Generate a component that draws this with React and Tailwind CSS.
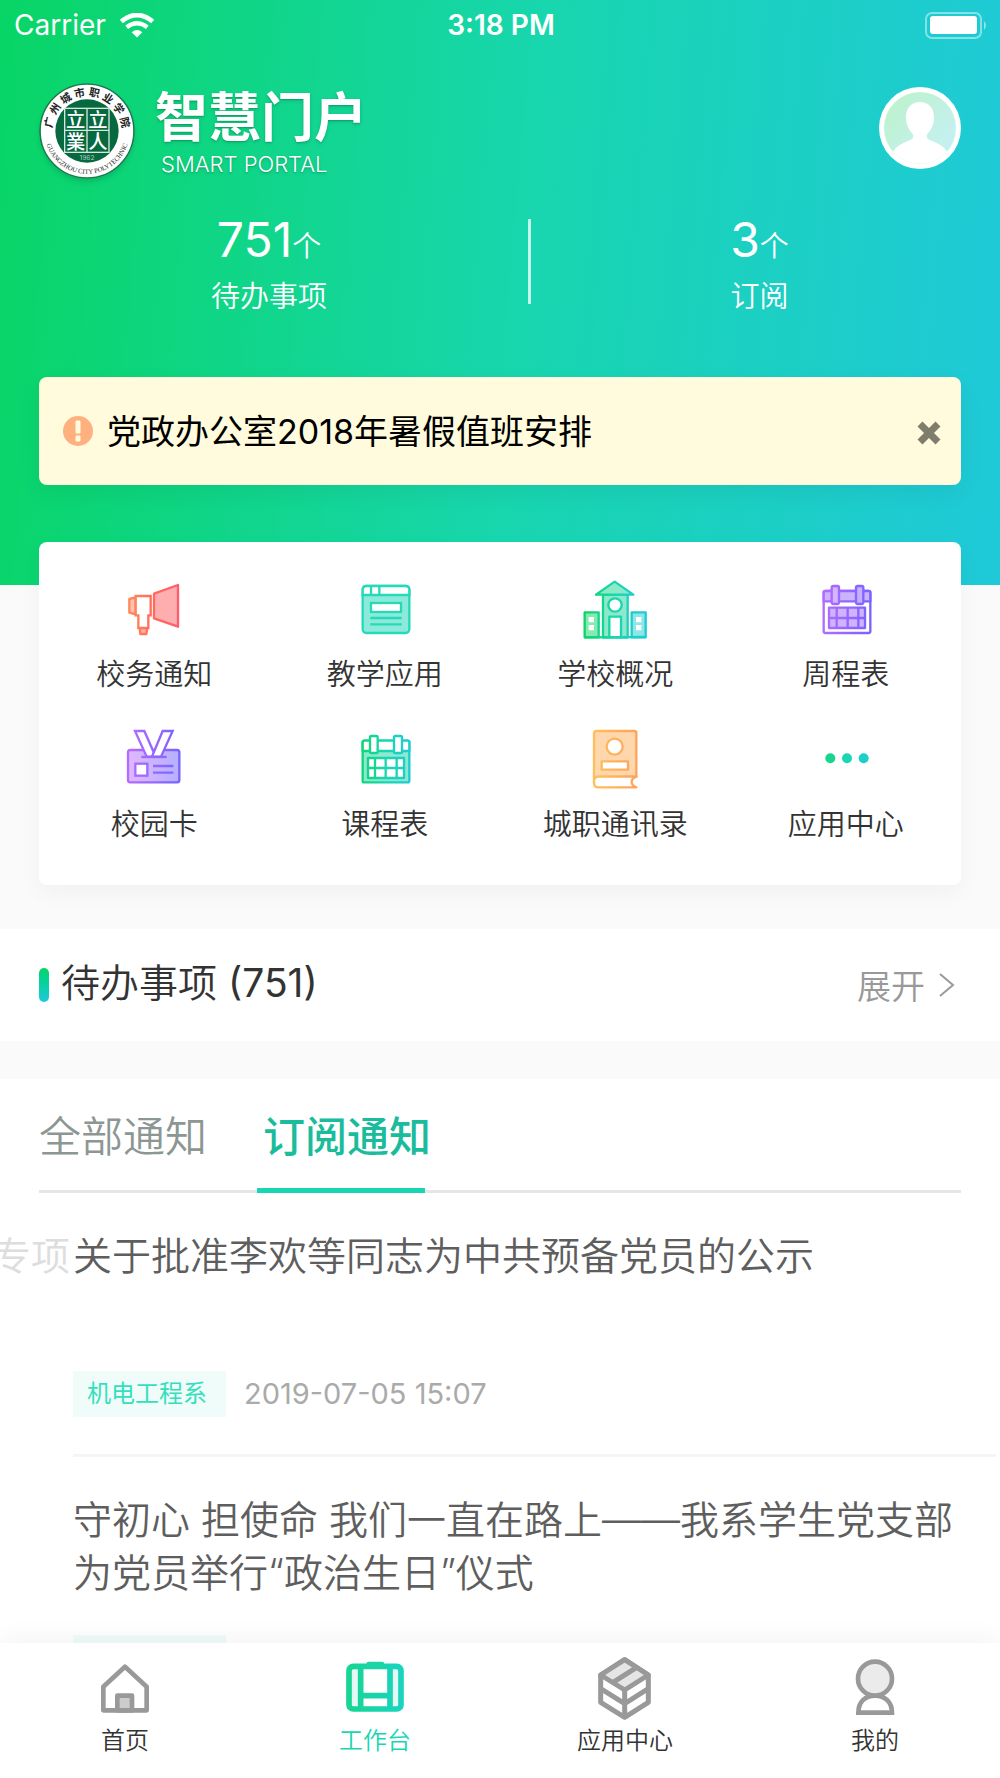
import { useState } from "react";

const SEAL_TOP = ["广", "州", "城", "市", "职", "业", "学", "院"];

function Seal() {
  return (
    <svg
      viewBox="0 0 288 288"
      className="w-24 h-24 shrink-0 rounded-full shadow-md"
      role="img"
      aria-label="广州城市职业学院"
    >
      <circle cx="144" cy="144" r="141" fill="#fff" stroke="#1c7a4c" strokeWidth="5" />
      <circle cx="144" cy="144" r="95" fill="#06693f" />
      {SEAL_TOP.map((char, i) => (
        <text
          key={char}
          x="144"
          y="39"
          textAnchor="middle"
          fontSize="32"
          fontWeight="700"
          fill="#222"
          transform={`rotate(${-77 + i * 22} 144 144)`}
        >
          {char}
        </text>
      ))}
      <path id="seal-arc" d="M19 172A128 128 0 0 0 269 172" fill="none" />
      <text fontSize="20" fontFamily="Liberation Serif, serif" fill="#222">
        <textPath href="#seal-arc" startOffset="50%" textAnchor="middle">
          GUANGZHOU CITY POLYTECHNIC
        </textPath>
      </text>
      <g stroke="#d6e8de" strokeWidth="4" fill="none">
        <rect x="77" y="76" width="133" height="132" />
        <path d="M144 76V208M77 142H210" />
      </g>
      <g fill="#fff" fontSize="58" fontWeight="500" textAnchor="middle">
        <text x="110" y="131">立</text>
        <text x="177" y="131">立</text>
        <text x="110" y="197">業</text>
        <text x="177" y="197">人</text>
      </g>
      <text x="144" y="230" fontSize="20" fill="#a9d3bf" textAnchor="middle">
        1962
      </text>
    </svg>
  );
}

/* Gradients shared by the line icons */
function IconGradients() {
  return (
    <svg width="0" height="0" className="absolute" aria-hidden="true">
      <defs>
        <linearGradient id="red" gradientUnits="userSpaceOnUse" x1="20" y1="0" x2="170" y2="0">
          <stop offset="0" stopColor="#ff8a5c" />
          <stop offset="0.5" stopColor="#ff6b5c" />
          <stop offset="1" stopColor="#ff5c6c" />
        </linearGradient>
        <linearGradient id="green" gradientUnits="userSpaceOnUse" x1="5" y1="0" x2="189" y2="0">
          <stop offset="0" stopColor="#0bd566" />
          <stop offset="0.5" stopColor="#1ad6b0" />
          <stop offset="1" stopColor="#1fc9d8" />
        </linearGradient>
        <linearGradient id="teal" gradientUnits="userSpaceOnUse" x1="9" y1="0" x2="183" y2="0">
          <stop offset="0" stopColor="#17d592" />
          <stop offset="1" stopColor="#1ad4c0" />
        </linearGradient>
        <linearGradient id="purple" gradientUnits="userSpaceOnUse" x1="20" y1="0" x2="172" y2="0">
          <stop offset="0" stopColor="#b46cff" />
          <stop offset="1" stopColor="#7a62ff" />
        </linearGradient>
        <linearGradient id="orange" gradientUnits="userSpaceOnUse" x1="33" y1="0" x2="160" y2="0">
          <stop offset="0" stopColor="#ffbf5a" />
          <stop offset="1" stopColor="#ffa35f" />
        </linearGradient>
      </defs>
    </svg>
  );
}

function Icon({ children }) {
  return (
    <svg viewBox="0 0 192 192" className="w-16 h-16" fill="none" aria-hidden="true">
      {children}
    </svg>
  );
}

function MegaphoneIcon() {
  return (
    <Icon>
      <g stroke="url(#red)" strokeWidth="7" strokeLinejoin="round">
        <path d="M96 50L168 24V149L96 124Z" fill="#ffaeb0" />
        <path d="M41 61L22 66V107L41 112Z" fill="#ffc3ad" />
        <path d="M53 153L55 171H73L76 153Z" fill="#ffb5a8" />
        <path d="M41 57H86V115H79V153H49V115H41Z" fill="#fff" strokeLinejoin="miter" />
      </g>
    </Icon>
  );
}

function TeachingIcon() {
  return (
    <Icon>
      <g stroke="#26d9b8" strokeWidth="7">
        <rect x="29" y="27" width="140" height="141" rx="11" fill="#8ceadb" />
        <path d="M29 54V38Q29 27 40 27H158Q169 27 169 38V54Z" fill="#fff" />
        <path d="M54 27V54M79 27V54" />
        <rect x="54" y="78" width="90" height="27" fill="#fff" />
        <path d="M52 123H146M52 142H146" />
      </g>
    </Icon>
  );
}

function SchoolIcon() {
  return (
    <Icon>
      <g stroke="url(#green)" strokeWidth="7" strokeLinejoin="round">
        <rect x="60" y="53" width="74" height="128" fill="#8ceacb" />
        <path d="M95 14L151 53H39Z" fill="#8ceacb" />
        <circle cx="96" cy="84" r="20" fill="#fff" />
        <path d="M79 181V119H114V181" fill="#fff" />
        <rect x="5" y="106" width="42" height="75" fill="#85eab2" />
        <rect x="146" y="106" width="42" height="75" fill="#8fe6e8" />
        <path d="M60 181H134" />
        <path d="M5 181L188 180" />
      </g>
      <path
        d="M17 120h16v16H17zM17 144h16v16H17zM159 120h16v16H159zM159 144h16v16H159z"
        fill="#fff"
      />
    </Icon>
  );
}

function WeekIcon() {
  return (
    <Icon>
      <g stroke="url(#purple)" strokeWidth="7" strokeLinejoin="round">
        <rect x="29" y="42" width="140" height="126" rx="5" fill="#fff" />
        <path d="M29 73V47Q29 42 34 42H164Q169 42 169 47V73Z" fill="#ccb3ff" />
        <rect x="53" y="27" width="22" height="54" rx="5" fill="#d3b6ff" />
        <rect x="126" y="27" width="22" height="54" rx="5" fill="#c3b1ff" />
        <path d="M45 92H153V153H45Z" fill="#cfb3ff" />
        <path d="M68 92V153M101 92V153M133 92V153M45 123H153" />
      </g>
    </Icon>
  );
}

function CampusCardIcon() {
  return (
    <Icon>
      <linearGradient id="cardFill" x1="0" x2="1">
        <stop offset="0" stopColor="#dfb8ff" />
        <stop offset="1" stopColor="#b5b0ff" />
      </linearGradient>
      <g stroke="url(#purple)" strokeWidth="7">
        <rect x="18" y="69" width="154" height="97" rx="7" fill="url(#cardFill)" />
        <path d="M39 12H67L101 89H74Z" fill="#fff" />
        <path d="M122 12H152L117 89H90Z" fill="#fff" />
        <path d="M58 90H134" />
        <rect x="40" y="110" width="36" height="36" fill="#fff" />
        <path d="M93 117H154M93 137H154" />
      </g>
    </Icon>
  );
}

function ScheduleIcon() {
  return (
    <Icon>
      <g stroke="url(#green)" strokeWidth="7" strokeLinejoin="round">
        <rect x="29" y="41" width="140" height="125" rx="5" fill="#8ce8d0" />
        <path d="M29 72V46Q29 41 34 41H164Q169 41 169 46V72Z" fill="#fff" />
        <rect x="51" y="27" width="23" height="51" rx="4" fill="#fff" />
        <rect x="123" y="27" width="24" height="51" rx="4" fill="#fff" />
        <path d="M45 93H153V153H45Z" fill="#fff" />
        <path d="M66 93V153M98 93V153M131 93V153M45 123H153" />
      </g>
    </Icon>
  );
}

function ContactsIcon() {
  return (
    <Icon>
      <g stroke="url(#orange)" strokeWidth="7" strokeLinejoin="round">
        <path d="M160 149V18Q160 12 154 12H41Q33 12 33 20V165L44 149Z" fill="#ffd7ac" />
        <path d="M160 149H47Q33 149 33 163V167Q33 181 47 181H160Q146 176 146 165Q146 154 160 149Z" fill="#fff" />
        <circle cx="95" cy="59" r="24" fill="#fff" />
        <rect x="56" y="103" width="79" height="25" fill="#fff" />
      </g>
    </Icon>
  );
}

function MoreIcon() {
  return (
    <Icon>
      <circle cx="49" cy="94" r="15" fill="#17d591" />
      <circle cx="99" cy="94" r="15" fill="#1ad6b2" />
      <circle cx="149" cy="94" r="15" fill="#1dcfc6" />
    </Icon>
  );
}

function HomeIcon() {
  return (
    <Icon>
      <g stroke="#999" strokeWidth="14" strokeLinejoin="round">
        <path d="M31 92L96 32L161 92V163H31Z" />
        <path d="M73 163V119H117V163Z" fill="#ccc" />
      </g>
    </Icon>
  );
}

function WorkbenchIcon() {
  return (
    <Icon>
      <rect x="17" y="30" width="158" height="129" rx="12" fill="#e3f9f4" />
      <path d="M53 34H141V155H53Z" fill="#fff" />
      <g stroke="url(#teal)" strokeWidth="17">
        <rect x="18" y="31" width="156" height="128" rx="13" />
        <path d="M53 31V159M141 31V159M53 119H141" />
      </g>
      <rect x="70" y="17" width="54" height="22" rx="7" fill="#1ad6a6" />
    </Icon>
  );
}

function AppsIcon() {
  return (
    <Icon>
      <g stroke="#999" strokeWidth="15" strokeLinejoin="round">
        <path d="M95 11L166 57V139L95 184L23 139V57Z" fill="#fff" />
        <path d="M95 11L166 57L95 102L23 57Z" fill="#e5e5e5" />
        <path d="M59 80L131 34M95 102V184M23 98L95 143L166 98" />
      </g>
    </Icon>
  );
}

function MineIcon() {
  return (
    <Icon>
      <g stroke="#999" strokeWidth="14">
        <path d="M46 170C46 138 66 119 96 119S147 138 147 170Z" fill="#fff" />
        <circle cx="96" cy="68" r="51" fill="#ebebeb" />
      </g>
    </Icon>
  );
}

const apps = [
  { label: "校务通知", icon: MegaphoneIcon },
  { label: "教学应用", icon: TeachingIcon },
  { label: "学校概况", icon: SchoolIcon },
  { label: "周程表", icon: WeekIcon },
  { label: "校园卡", icon: CampusCardIcon },
  { label: "课程表", icon: ScheduleIcon },
  { label: "城职通讯录", icon: ContactsIcon },
  { label: "应用中心", icon: MoreIcon },
];

const notices = [
  {
    ghost: "专项",
    title: "关于批准李欢等同志为中共预备党员的公示",
    dept: "机电工程系",
    time: "2019-07-05 15:07",
  },
  {
    title: "守初心 担使命 我们一直在路上——我系学生党支部为党员举行“政治生日”仪式",
    dept: "",
    time: "",
  },
];

const navItems = [
  { label: "首页", icon: HomeIcon },
  { label: "工作台", icon: WorkbenchIcon, active: true },
  { label: "应用中心", icon: AppsIcon },
  { label: "我的", icon: MineIcon },
];

function StatusBar() {
  return (
    <div className="grid grid-cols-3 items-center h-[50px] pl-[14px] pr-3 text-[28px]">
      <div className="flex items-center gap-[14px]">
        <span>Carrier</span>
        <svg viewBox="0 0 102 74" className="w-[34px] h-[25px]" fill="none" aria-label="Wi-Fi">
          <path d="M4 25Q51 -14 98 25" stroke="#fff" strokeWidth="14" />
          <path d="M20 42Q51 18 82 42" stroke="#fff" strokeWidth="13" />
          <path d="M35 57Q51 44 67 57L51 73Z" fill="#fff" />
        </svg>
      </div>
      <span className="text-center font-semibold">3:18 PM</span>
      <svg viewBox="0 0 63 27" className="w-[63px] h-[27px] justify-self-end" aria-label="Battery">
        <rect x="1" y="1" width="55" height="25" rx="6" fill="none" stroke="#fff" strokeOpacity="0.45" strokeWidth="2" />
        <rect x="5" y="4" width="47" height="18" rx="3" fill="#fff" />
        <path d="M59 9Q63 13 59 18Z" fill="#fff" fillOpacity="0.5" />
      </svg>
    </div>
  );
}

function Stat({ value, label, className }) {
  return (
    <div className={`flex flex-col items-center ${className}`}>
      <p className="text-[48px] leading-[52px]">
        {value}
        <span className="text-[29px] font-[350]">个</span>
      </p>
      <p className="text-[29px] leading-[44px] mt-[2px] font-[350]">{label}</p>
    </div>
  );
}

function NoticeItem({ ghost, title, dept, time }) {
  return (
    <li>
      <div className="flex pt-9 text-[39px] leading-[53px] font-[350]">
        <div className="w-[73px] shrink-0 flex justify-end overflow-hidden whitespace-nowrap pr-[3px] text-[#ddd]">
          {ghost}
        </div>
        <h3 className="flex-1 min-h-[106px] pr-10 text-[#5e5e5e]">{title}</h3>
      </div>
      <div className="flex items-center gap-[18px] ml-[73px] mt-9 mb-[37px]">
        <span className="min-w-[153px] h-[46px] px-[14px] bg-[#effcf9] text-2xl leading-[46px] text-[#35dfbd]">
          {dept}
        </span>
        <time className="text-[29px] leading-[46px] text-[#aaa]">{time}</time>
      </div>
      <div className="ml-[73px] mr-1 border-b-[3px] border-[#f5f5f5]" />
    </li>
  );
}

function App() {
  const [showNotice, setShowNotice] = useState(true);
  const [tab, setTab] = useState(1);

  return (
    <div className="h-screen flex flex-col overflow-hidden bg-[#fafafa] font-['Inter','Noto_Sans_CJK_SC',sans-serif] text-[#333]">
      <IconGradients />
      <main className="flex-1 min-h-0 overflow-hidden">
        <header className="bg-[linear-gradient(95deg,#08d565_0%,#18d6ae_52%,#1fc9d9_100%)] pb-[100px] text-white">
          <StatusBar />

          <div className="flex items-start justify-between px-[39px] pt-[33px]">
            <div className="flex items-center gap-5">
              <Seal />
              <div className="pt-[2px] text-shadow-md">
                <h1 className="text-[53px] leading-[64px] font-bold">智慧门户</h1>
                <p className="pl-[6px] text-[22px] leading-[28px] font-light">SMART PORTAL</p>
              </div>
            </div>
            <button aria-label="个人中心" className="mt-1 w-[82px] h-[82px] rounded-full overflow-hidden bg-white">
              <svg viewBox="0 0 246 246" className="w-full h-full" aria-hidden="true">
                <defs>
                  <linearGradient id="avatarFill" x1="0.1" y1="0.1" x2="0.9" y2="0.9">
                    <stop offset="0" stopColor="#bdf2cd" />
                    <stop offset="1" stopColor="#c6f0f6" />
                  </linearGradient>
                </defs>
                <circle cx="123" cy="123" r="108" fill="url(#avatarFill)" />
                <path
                  d="M123 45C96 45 81 64 81 91C81 115 91 131 101 141C106 150 101 157 92 160C70 169 51 178 42 194A108 108 0 0 0 204 194C195 178 176 169 154 160C145 157 140 150 145 141C155 131 165 115 165 91C165 64 150 45 123 45Z"
                  fill="#fff"
                />
              </svg>
            </button>
          </div>

          <div className="flex items-start pt-[35px]">
            <Stat value="751" label="待办事项" className="w-[53%] pl-2" />
            <div className="w-[3px] h-[85px] mt-[5px] -ml-[2px] bg-white/75" />
            <Stat value="3" label="订阅" className="flex-1 pr-3" />
          </div>

          {showNotice && (
            <div className="flex items-center mx-[39px] mt-[58px] h-[108px] pl-6 pr-5 rounded-lg bg-[#fffbdc] shadow-[0_8px_24px_rgba(0,0,0,0.06)]">
              <svg viewBox="0 0 30 30" className="w-[30px] h-[30px]" aria-hidden="true">
                <circle cx="15" cy="15" r="15" fill="#ffb07f" />
                <path d="M13 5H17L17 17H13ZM13 20H17V25H13Z" fill="#fffbdc" stroke="#fffbdc" strokeLinejoin="round" />
              </svg>
              <p className="flex-1 ml-[14px] text-[34px] text-black">党政办公室2018年暑假值班安排</p>
              <button aria-label="关闭" onClick={() => setShowNotice(false)} className="mt-1">
                <svg viewBox="0 0 24 24" className="w-6 h-6" aria-hidden="true">
                  <path d="M3 3L21 21M21 3L3 21" stroke="#7f7d6e" strokeWidth="7" />
                </svg>
              </button>
            </div>
          )}
        </header>

        <section className="relative -mt-[43px] mx-[39px] grid grid-cols-4 gap-y-[30px] pt-[35px] pb-[38px] rounded-lg bg-white shadow-[0_8px_24px_rgba(0,0,0,0.04)]">
          {apps.map(({ label, icon: AppIcon }) => (
            <a key={label} href="#" className="flex flex-col items-center">
              <AppIcon />
              <span className="mt-3 text-[29px] leading-[44px] font-[350] whitespace-nowrap">{label}</span>
            </a>
          ))}
        </section>

        <section className="flex items-start justify-between mt-11 px-[39px] h-[112px] bg-white">
          <div className="flex items-center pt-[26px]">
            <span className="w-[10px] h-[34px] mt-1 rounded-full bg-linear-to-b from-[#08d565] to-[#1fc9d9]" />
            <h2 className="ml-3 text-[39px] leading-[56px] font-[350]">
              待办事项 <span className="font-normal">(751)</span>
            </h2>
          </div>
          <a href="#" className="flex items-center gap-[14px] pt-[33px] pr-[6px] text-[34px] leading-[50px] text-[#999] font-[350]">
            展开
            <svg viewBox="0 0 16 24" className="w-4 h-6 mb-1" fill="none" aria-hidden="true">
              <path d="M1 1L14 12L1 23" stroke="#999" strokeWidth="2" />
            </svg>
          </a>
        </section>

        <section className="mt-[38px] bg-white">
          <div role="tablist" className="flex gap-[50px] mx-[39px] h-[114px] border-b-[3px] border-[#e6e6e6]">
            {["全部通知", "订阅通知"].map((name, i) => (
              <button
                key={name}
                role="tab"
                aria-selected={tab === i}
                onClick={() => setTab(i)}
                className={`relative h-[114px] text-[42px] leading-[116px] ${
                  tab === i ? "pl-[6px] font-medium text-[#1abc9c]" : "font-[350] text-[#8c9793]"
                }`}
              >
                {name}
                {tab === i && <span className="absolute left-0 bottom-0 w-[168px] h-[5px] bg-[#18d6b4]" />}
              </button>
            ))}
          </div>
          <ul>
            {notices.map((item) => (
              <NoticeItem key={item.title} {...item} />
            ))}
          </ul>
        </section>
      </main>

      <nav className="relative grid grid-cols-4 h-[135px] pt-[13px] bg-white shadow-[0_-4px_24px_rgba(0,0,0,0.05)]">
        {navItems.map(({ label, icon: NavIcon, active }) => (
          <a key={label} href="#" className={`flex flex-col items-center ${active ? "text-[#18d6b4]" : ""}`}>
            <NavIcon />
            <span className="text-2xl leading-[42px] font-[350]">{label}</span>
          </a>
        ))}
      </nav>
    </div>
  );
}

export default App;
